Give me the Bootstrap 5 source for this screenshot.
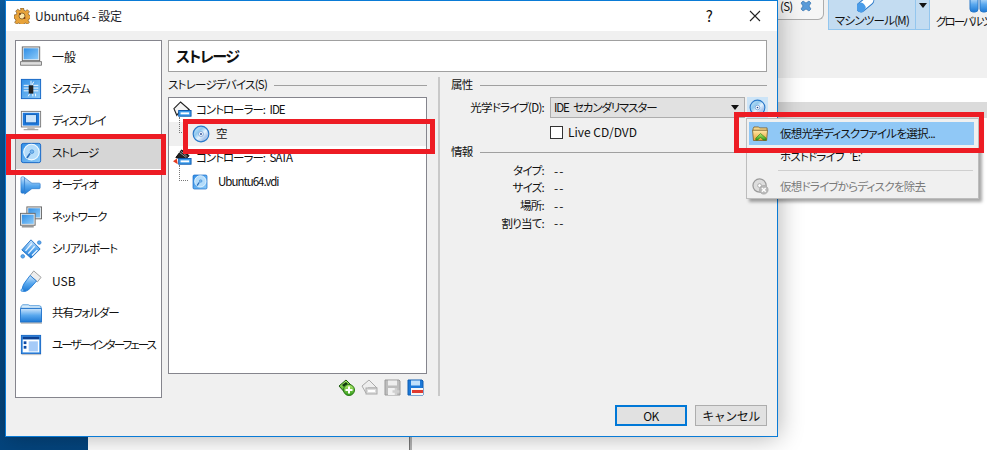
<!DOCTYPE html>
<html lang="ja">
<head>
<meta charset="utf-8">
<title>Ubuntu64 - 設定</title>
<link href="https://cdn.jsdelivr.net/npm/bootstrap@5.3.0/dist/css/bootstrap.min.css" rel="stylesheet">
<style>
html,body{margin:0;height:100%;overflow:hidden}
body{background:linear-gradient(#0b60a8,#04457e);font:11.5px/1.2 "Noto Sans CJK JP","Noto Sans",sans-serif;font-feature-settings:"palt";letter-spacing:-.75px;word-spacing:3px;color:#111}
.stage{position:relative;width:987px;height:450px;overflow:hidden}
.backwin{position:absolute;left:88px;top:0;right:0;bottom:0;background:#f0f0f0}
.bw-tools{height:78px;background:#f0f0f0;padding-left:688px;white-space:nowrap}
.bw-tab{width:48px;height:20px;background:#f6f6f6;border:1px solid #adadad;border-width:0 1px 1px 0;border-bottom-right-radius:6px;padding-left:4px;gap:8px;flex:none}
.bw-mach{width:102px;height:30px;background:#c3dcf1;border:1px solid #93c6ee;border-top:0;margin-left:4px;flex:none}
.bw-mach-main{width:87px;border-right:1px solid #93c6ee;padding-top:14px}
.bw-arrow{width:0;height:0;border:4px solid transparent;border-top:5px solid #111;border-bottom:0;margin:3px 0 0 3px}
.bw-glob{margin-left:6px;padding-top:15px;flex:none;width:53px;height:30px;letter-spacing:-1.9px}
.pilltop{position:absolute;top:-3px}
.bw-white{height:24px;background:#fff}
.bw-grey{height:16px;background:#dbdbdb}
.bw-rest{height:332px;background:#fff}
.bw-lower{position:absolute;left:409px;top:430px;width:3px;height:20px;background:#b5b5b5;border-left:1px solid #777}
.dlg{position:absolute;left:5px;top:0;width:773px;height:437px;background:#f0f0f0;border:1px solid #0a7bd6;box-shadow:0 0 24px rgba(0,0,0,.32)}
.dlg-title{height:30px;background:#fff;padding-left:8px}
.dlg-title .ttl{margin-left:5px;color:#1c1c28;font-size:12px;letter-spacing:-.2px;word-spacing:0}
.cap-help{margin-left:auto;font-size:15px;width:46px;text-align:center;padding-left:2px}
.cap-close{width:46px;display:flex;justify-content:center;padding-left:2px}
.dlg-body{padding:9px 10px 0 9px}
.side{width:147px;height:358px;background:#fff;border:1px solid #85858d;border-radius:0;display:block}
.side-it{height:32px;padding:0 0 0 4px;border:0;border-radius:0;background:transparent;gap:10px;color:#111;display:flex;align-items:center;white-space:nowrap;letter-spacing:-1.1px;font-size:11.5px}
.side-it.wide{letter-spacing:0;font-size:12px}
.side-it.tight{letter-spacing:-1.9px}
.side-it.sel{background:#d6d6d6}
.rpane{width:599px;margin-left:6px}
.hdbox{height:32px;background:#fff;border:1px solid #a0a0a0;font-weight:700;font-size:15px;letter-spacing:-1.4px;padding-left:7px;margin-bottom:5px;display:flex;align-items:center}
.lcol{width:259px}
.grp{height:16px;gap:7px}
.grp i{flex:1;border-top:1px solid #a0a0a0;display:block}
.tree{height:277px;background:#fff;border:1px solid #85858d;margin-top:4px;letter-spacing:-1px}
.tr{height:24px;padding-left:4px;gap:4px}
.tr.on{background:#efefef}
.tr.kid{padding-left:10px;gap:2px}
.dots{width:9px;height:16px;margin-top:-18px;margin-right:2px;border-left:1px dotted #777;border-bottom:1px dotted #777;flex:none}
.tree-tools{height:24px;gap:6px;padding:5px 3px 0 0}
.vsep{width:2px;height:319px;background:#c9c9c9;margin:0 11px}
.rcol{width:316px}
.lab{width:93px;text-align:right;flex:none}
.combo{width:195px;height:21px;margin-left:6px;background:#e1e1e1;border:1px solid #adadad;padding:0 5px 0 3px;letter-spacing:-1.15px}
.combo-arr{margin-left:auto;width:0;height:0;border:4px solid transparent;border-top:5px solid #111;border-bottom:0}
.cdbtn{width:21px;height:21px;margin-left:2px;margin-right:-1px;background:#cce4f7;flex:none}
.drow{margin-top:4px}
.crow{margin:8px 0 5px 99px;height:13px;gap:5px;letter-spacing:0;word-spacing:0;font-size:12px}
.boxchk.form-check-input{width:13px;height:13px;margin:0;border:1px solid #333;border-radius:0;float:none;flex:none}
.irow{height:17.6px}
.ival{margin-left:10px;letter-spacing:1px;font-size:12px}
.info{margin-top:2px}
.dlg-foot{padding:7px 10px 0 0;gap:8px}
.wbtn.btn{width:72px;height:21px;padding:0;border-radius:0;font-size:12px;letter-spacing:-.5px;line-height:1;background:#e1e1e1;border:1px solid #adadad;color:#111;display:flex;align-items:center;justify-content:center}
.wbtn.btn.pri{border:2px solid #0078d7}
.pop{position:absolute;left:746px;top:118px;width:233px;height:81px;background:#f0f0f0;border:1px solid #bdbdbd;box-shadow:3px 3px 3px rgba(0,0,0,.35);padding:3px 4px 0 2px}
.pop-it{height:23px;gap:11px;padding-left:3px}
.pop-it.hot{background:#90c8f6}
.pop-gap{width:17px;flex:none}
.pop-sep{border-top:1px solid #cfcfcf;margin:2px 1px 4px 29px}
.pop-it.dis{color:#7a7a7a}
.redbox{position:absolute;border:5px solid #ed1c24;pointer-events:none}
.rb1{left:6px;top:134px;width:160px;height:41px}
.rb2{left:183px;top:119px;width:252px;height:35px}
.rb3{left:734px;top:112px;width:250px;height:41px}
svg{display:block;flex:none}
</style>
</head>
<body>
<svg width="0" height="0" style="position:absolute">
<defs>
<linearGradient id="gb" x1="0" y1="0" x2="0" y2="1"><stop offset="0" stop-color="#cfe6fb"/><stop offset=".5" stop-color="#59a8ee"/><stop offset="1" stop-color="#1c78d4"/></linearGradient>
<linearGradient id="gs" x1="0" y1="0" x2="1" y2="1"><stop offset="0" stop-color="#2f8ee6"/><stop offset="1" stop-color="#8ccaf8"/></linearGradient>
<linearGradient id="gd" x1="0" y1="0" x2="1" y2="1"><stop offset="0" stop-color="#d9eefc"/><stop offset=".35" stop-color="#8fc8ee"/><stop offset=".55" stop-color="#e6f4ff"/><stop offset=".75" stop-color="#a8c4ea"/><stop offset="1" stop-color="#e8f2fa"/></linearGradient>
<linearGradient id="gf" x1="0" y1="0" x2="0" y2="1"><stop offset="0" stop-color="#ffe9a8"/><stop offset="1" stop-color="#e8a030"/></linearGradient>
<linearGradient id="gg" x1="0" y1="0" x2="0" y2="1"><stop offset="0" stop-color="#b6ec70"/><stop offset="1" stop-color="#2f9a18"/></linearGradient>
<symbol id="i-general" viewBox="0 0 24 24"><rect x="2.5" y="1" width="19" height="15" fill="#eee" stroke="#666"/><rect x="4" y="2.5" width="16" height="12" fill="url(#gs)"/><path d="M.5 17h23v4H.5z" fill="#ddd" stroke="#777"/></symbol>
<symbol id="i-system" viewBox="0 0 24 24"><rect x="1.5" y="1.5" width="21" height="21" fill="url(#gs)" stroke="#0f63c4"/><path d="M4 8h6M4 11h6M4 14h6M14 8h6M14 11h6M14 14h6M12 3v5M15 4l-2 4M9 20l2-4M14 20v-3M17 20v-3" stroke="#fff"/><rect x="9.500" y="8" width="5" height="9" fill="#222"/></symbol>
<symbol id="i-display" viewBox="0 0 24 24"><rect x="1.500" y="1.500" width="21" height="17" fill="#fff" stroke="#777"/><rect x="3" y="3" width="18" height="14" fill="#1e78da"/><rect x="6" y="5" width="12" height="9" fill="#cbe4fb" stroke="#0f5eb8"/><path d="M8 19h8v2H8z" fill="#bbb"/><path d="M4 21.500h16" stroke="#888"/></symbol>
<symbol id="i-disk" viewBox="0 0 24 24"><rect x="1.500" y="1.500" width="21" height="21" rx="2" fill="url(#gs)" stroke="#0f63c4"/><circle cx="12.500" cy="11" r="8.500" fill="#b4dcfa" stroke="#f2faff" stroke-width="1.200"/><circle cx="13" cy="10.500" r="2" fill="#7ab8ee" stroke="#2f7fce" stroke-width=".7"/><path d="M11 12.500L7.500 17.500" stroke="#2a6cb8" stroke-width="1.800"/></symbol>
<symbol id="i-audio" viewBox="0 0 24 24"><rect x="1" y="3" width="4" height="18" rx="1.500" fill="url(#gb)" stroke="#2474c8" stroke-width=".6"/><path d="M5 4l8 6h8c1 0 1 1 1 1v4s0 1-1 1h-8l-8 6z" fill="url(#gb)" stroke="#2474c8" stroke-width=".7"/></symbol>
<symbol id="i-net" viewBox="0 0 24 24"><rect x="7.500" y="1" width="16" height="13" fill="#eee" stroke="#666"/><rect x="9" y="2.500" width="13" height="10" fill="url(#gs)"/><rect x=".5" y="8" width="16" height="13" fill="#eee" stroke="#666"/><rect x="2" y="9.500" width="13" height="10" fill="url(#gs)"/><path d="M2 21.500h13v2H2z" fill="#999"/></symbol>
<symbol id="i-serial" viewBox="0 0 24 24"><path d="M2 13L12 2l10 10-10 10z" fill="url(#gb)" stroke="#1c6dc4"/><path d="M6 14l7-8M9 17l7-8M13 19l6-6" stroke="#e6f3ff" stroke-width="1.500"/><circle cx="3" cy="20" r="2" fill="#5aa9ee" stroke="#1c6dc4" stroke-width=".6"/><circle cx="21" cy="5" r="2" fill="#5aa9ee" stroke="#1c6dc4" stroke-width=".6"/></symbol>
<symbol id="i-usb" viewBox="0 0 24 24"><path d="M15 1l8 7-4 5-8-7z" fill="#eee" stroke="#999"/><path d="M11 6l7 6-7 8c-3 3-6 4-8 3-1-3 0-6 2-9z" fill="url(#gb)" stroke="#1c78d4"/><circle cx="2.500" cy="22" r="1.500" fill="#7bbcf2" stroke="#1c78d4" stroke-width=".6"/></symbol>
<symbol id="i-folder" viewBox="0 0 24 24"><path d="M1 5l2-2h6l2 1h10l2 1v2H1z" fill="#d5ebfb" stroke="#2f83d2" stroke-width=".8"/><path d="M.5 7h23v15H.5z" fill="url(#gb)" stroke="#1a6fc8"/><path d="M1 23h23" stroke="#999"/></symbol>
<symbol id="i-ui" viewBox="0 0 24 24"><rect x="1.500" y="1.500" width="21" height="20" fill="#3a90e6" stroke="#1465c4"/><rect x="3" y="3" width="18" height="3" fill="#0d3f90"/><rect x="3" y="6" width="18" height="14" fill="#fff"/><rect x="9.500" y="8" width="10" height="11" fill="#a6cbf8"/><rect x="4" y="8" width="3" height="3" fill="#0d4aa4"/><rect x="4" y="13" width="3" height="3" fill="#0d4aa4"/><path d="M2 22.500h21" stroke="#bbb"/></symbol>
<symbol id="i-cd" viewBox="0 0 20 20"><circle cx="10" cy="10" r="8.700" fill="url(#gd)" stroke="#2a78c8" stroke-width="1.300"/><circle cx="10" cy="10" r="2.700" fill="#fff" stroke="#7aa4d8"/><circle cx="10" cy="10" r="1" fill="#22448c"/></symbol>
<symbol id="i-ctl" viewBox="0 0 20 20"><path d="M1 8l7-7 9 8-3 2H7l-3 4z" fill="#f4f4f4" stroke="#222" stroke-width="1.200"/><rect x="6" y="10" width="13" height="6" fill="#3c9bea" stroke="#0d58ac"/><rect x="8" y="12" width="9" height="2" fill="#fff"/></symbol>
<symbol id="i-sata" viewBox="0 0 20 20"><path d="M3 9l6-8 8 6-3 3H7z" fill="#222" stroke="#000"/><path d="M6 3l8 6M8 2l7 6" stroke="#999"/><path d="M0 13l4-3 1 6z" fill="#e23a20"/><rect x="6" y="10" width="13" height="6" fill="#3c9bea" stroke="#0d58ac"/><rect x="8" y="12" width="9" height="2" fill="#fff"/></symbol>
<symbol id="t-add" viewBox="0 0 17 17"><path d="M1 7l7-6 7 7-6 8z" fill="url(#gg)" stroke="#1a5a10"/><path d="M4 6l4-3 2 2-4 3z" fill="#123c10"/><circle cx="11" cy="11" r="5.500" fill="url(#gg)" stroke="#2a7a18"/><path d="M11 7.500v7M7.500 11h7" stroke="#fff" stroke-width="2"/></symbol>
<symbol id="t-rem" viewBox="0 0 17 17"><path d="M1 7l7-6 8 8H7l-2 5z" fill="#eee" stroke="#aaa"/><rect x="5" y="9" width="11" height="6" fill="#ddd" stroke="#aaa"/><rect x="7" y="11" width="7" height="2" fill="#fff"/></symbol>
<symbol id="t-fadd" viewBox="0 0 17 17"><path d="M1 1h14l1 1v14H1z" fill="#bdbdbd" stroke="#9a9a9a"/><rect x="4" y="1.500" width="9" height="5" fill="#eee"/><rect x="4" y="9" width="9" height="7" fill="#f2f2f2"/><path d="M12 9v7M8.500 12.500h7" stroke="#d0d0d0" stroke-width="2.500"/></symbol>
<symbol id="t-frem" viewBox="0 0 17 17"><path d="M1 1h14l1 1v14H1z" fill="#1b78d8" stroke="#0e5cb0"/><rect x="4" y="1.500" width="9" height="5" fill="#bfe0fb"/><rect x="4" y="9" width="12" height="7" fill="#f6f6f6"/><rect x="5" y="11" width="11" height="3" fill="#e03a30"/></symbol>
<symbol id="m-open" viewBox="0 0 18 16"><path d="M1 3l1-2h5l1 1h8v3H1z" fill="#f3d58a" stroke="#7a5a20" stroke-width=".8"/><path d="M.5 4.500h16l-1 11H1.500z" fill="url(#gf)" stroke="#7a5a20" stroke-width=".8"/><path d="M4 13l5-5 6 5v2h-3l-3-3-3 3H4z" fill="url(#gg)" stroke="#2a7a18" stroke-width=".7"/></symbol>
<symbol id="m-rem" viewBox="0 0 18 18"><circle cx="8" cy="8" r="7" fill="#ddd" stroke="#999" stroke-width="1.300"/><circle cx="8" cy="8" r="2" fill="#fff" stroke="#aaa"/><circle cx="12.500" cy="12.500" r="4.500" fill="#bbb" stroke="#aaa"/><path d="M10.500 10.500l4 4M14.500 10.500l-4 4" stroke="#fff" stroke-width="1.500"/></symbol>
<symbol id="t-gear" viewBox="0 0 16 16"><path d="M6.500 0h3l.4 2.200 1.600.7L13.400 1.700l2 2-1.200 1.900.7 1.600 2.100.3v3l-2.100.4-.7 1.600 1.200 1.800-2 2-1.900-1.200-1.600.7-.4 2.100h-3l-.4-2.100-1.600-.7-1.800 1.200-2-2 1.200-1.800-.7-1.600L0 10V7l2.200-.4.700-1.600L1.700 3.200l2-2 1.800 1.200 1.600-.7z" fill="#e8a33a" stroke="#6a4a20" stroke-width=".6"/><circle cx="8" cy="8" r="3" fill="#fbe6a8" stroke="#7a5520" stroke-width=".8"/><circle cx="6" cy="6" r="1" fill="#7a3a10"/><circle cx="10.500" cy="10" r="1" fill="#7a3a10"/></symbol>
</defs>
</svg>

<div class="stage">
  <div class="backwin">
    <div class="bw-tools d-flex">
      <div class="bw-tab d-flex align-items-start"><span>(S)</span>
        <svg width="12" height="12" viewBox="0 0 12 12"><path d="M3 1l3 2 3-2 2 2-2 3 2 3-2 2-3-2-3 2-2-2 2-3-2-3z" fill="#5b9bd8" stroke="#2a6aa8" stroke-width=".6"/></svg></div>
      <div class="bw-mach d-flex position-relative">
        <div class="bw-mach-main text-center position-relative">
          <svg class="pilltop" style="left:28px" width="20" height="16" viewBox="0 0 20 16"><rect x="-1" y="2" width="20" height="9" rx="4.500" transform="rotate(-40 9 8)" fill="#fff" stroke="#2a78c8"/><rect x="-1" y="2" width="9" height="9" rx="4" transform="rotate(-40 9 8)" fill="#4a9ce8"/></svg>
          マシンツール(M)</div>
        <div class="bw-arrow"></div>
      </div>
      <div class="bw-glob position-relative">
        <svg class="pilltop" style="left:33px" width="20" height="16" viewBox="0 0 20 16"><rect x="1" y="0" width="8" height="15" rx="3" fill="url(#gb)" stroke="#2a78c8"/><rect x="11" y="0" width="8" height="15" rx="3" fill="url(#gb)" stroke="#2a78c8"/></svg>
        グローバルツ</div>
    </div>
    <div class="bw-white"></div>
    <div class="bw-grey"></div>
    <div class="bw-rest"></div>
  </div>
  <div class="bw-lower"></div>

  <div class="dlg d-flex flex-column">
    <div class="dlg-title d-flex align-items-center">
      <svg width="16" height="16"><use href="#t-gear"/></svg>
      <span class="ttl">Ubuntu64 - 設定</span>
      <span class="cap-help">?</span>
      <span class="cap-close"><svg width="12" height="12" viewBox="0 0 12 12"><path d="M1 1l10 10M11 1L1 11" stroke="#222" stroke-width="1.100"/></svg></span>
    </div>
    <div class="dlg-body d-flex">
      <div class="list-group side">
        <div class="list-group-item side-it wide"><svg width="22" height="22"><use href="#i-general"/></svg>一般</div>
        <div class="list-group-item side-it"><svg width="22" height="22"><use href="#i-system"/></svg>システム</div>
        <div class="list-group-item side-it"><svg width="22" height="22"><use href="#i-display"/></svg>ディスプレイ</div>
        <div class="list-group-item side-it sel"><svg width="22" height="22"><use href="#i-disk"/></svg>ストレージ</div>
        <div class="list-group-item side-it"><svg width="22" height="22"><use href="#i-audio"/></svg>オーディオ</div>
        <div class="list-group-item side-it"><svg width="22" height="22"><use href="#i-net"/></svg>ネットワーク</div>
        <div class="list-group-item side-it"><svg width="22" height="22"><use href="#i-serial"/></svg>シリアルポート</div>
        <div class="list-group-item side-it wide"><svg width="22" height="22"><use href="#i-usb"/></svg>USB</div>
        <div class="list-group-item side-it"><svg width="22" height="22"><use href="#i-folder"/></svg>共有フォルダー</div>
        <div class="list-group-item side-it tight"><svg width="22" height="22"><use href="#i-ui"/></svg>ユーザーインターフェース</div>
      </div>
      <div class="rpane">
        <div class="hdbox">ストレージ</div>
        <div class="d-flex">
          <div class="lcol">
            <div class="grp d-flex align-items-center">ストレージデバイス(S)<i></i></div>
            <div class="tree">
              <div class="tr d-flex align-items-center"><svg width="19" height="19"><use href="#i-ctl"/></svg>コントローラー: IDE</div>
              <div class="tr kid on d-flex align-items-center"><span class="dots"></span><svg width="18" height="18"><use href="#i-cd"/></svg><span class="ms-1">空</span></div>
              <div class="tr d-flex align-items-center"><svg width="19" height="19"><use href="#i-sata"/></svg>コントローラー: SATA</div>
              <div class="tr kid d-flex align-items-center"><span class="dots"></span><svg width="16" height="16"><use href="#i-disk"/></svg><span class="ms-2">Ubuntu64.vdi</span></div>
            </div>
            <div class="tree-tools d-flex justify-content-end">
              <svg width="17" height="17"><use href="#t-add"/></svg>
              <svg width="17" height="17"><use href="#t-rem"/></svg>
              <svg width="17" height="17"><use href="#t-fadd"/></svg>
              <svg width="17" height="17"><use href="#t-frem"/></svg>
            </div>
          </div>
          <div class="vsep"></div>
          <div class="rcol">
            <div class="grp d-flex align-items-center">属性<i></i></div>
            <div class="drow d-flex align-items-center">
              <span class="lab">光学ドライブ(D):</span>
              <div class="combo d-flex align-items-center">IDE セカンダリマスター<span class="combo-arr"></span></div>
              <div class="cdbtn d-flex align-items-center justify-content-center"><svg width="17" height="17"><use href="#i-cd"/></svg></div>
            </div>
            <div class="crow d-flex align-items-center"><input class="form-check-input boxchk" type="checkbox" aria-label="Live CD/DVD"><span>Live CD/DVD</span></div>
            <div class="grp d-flex align-items-center">情報<i></i></div>
            <div class="info">
              <div class="irow d-flex align-items-center"><span class="lab">タイプ:</span><span class="ival">--</span></div>
              <div class="irow d-flex align-items-center"><span class="lab">サイズ:</span><span class="ival">--</span></div>
              <div class="irow d-flex align-items-center"><span class="lab">場所:</span><span class="ival">--</span></div>
              <div class="irow d-flex align-items-center"><span class="lab">割り当て:</span><span class="ival">--</span></div>
            </div>
          </div>
        </div>
      </div>
    </div>
    <div class="dlg-foot d-flex justify-content-end">
      <button type="button" class="btn wbtn pri">OK</button>
      <button type="button" class="btn wbtn">キャンセル</button>
    </div>
  </div>

  <div class="pop">
    <div class="pop-it hot d-flex align-items-center"><svg width="17" height="15"><use href="#m-open"/></svg>仮想光学ディスクファイルを選択...</div>
    <div class="pop-it d-flex align-items-center"><span class="pop-gap"></span>ホストドライブ 'E:'</div>
    <div class="pop-sep"></div>
    <div class="pop-it dis d-flex align-items-center"><svg width="17" height="17"><use href="#m-rem"/></svg>仮想ドライブからディスクを除去</div>
  </div>

  <div class="redbox rb1"></div>
  <div class="redbox rb2"></div>
  <div class="redbox rb3"></div>
</div>
<script src="https://cdn.jsdelivr.net/npm/bootstrap@5.3.0/dist/js/bootstrap.bundle.min.js"></script>
</body>
</html>
